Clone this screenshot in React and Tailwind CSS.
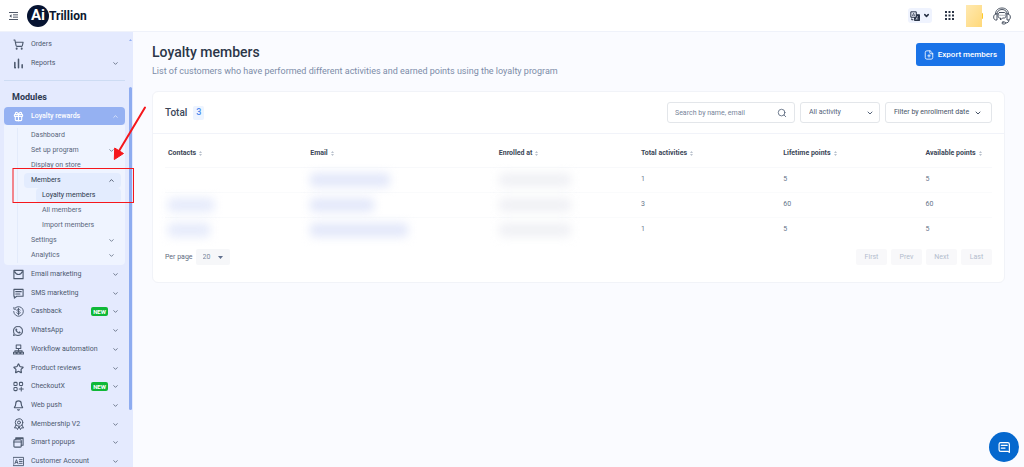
import React from "react";
import { ShoppingCart, Gift, ChevronDown, ChevronUp, Star, Bell, Search } from "lucide-react";
import { BsWhatsapp } from "react-icons/bs";

function Svg({ children, className = "size-[11px]", width = 1.7 }) {
  return (
    <svg viewBox="0 0 24 24" className={className} fill="none" stroke="currentColor" strokeWidth={width} strokeLinecap="round" strokeLinejoin="round" aria-hidden="true">
      {children}
    </svg>
  );
}

const BarsIcon = () => (
  <Svg width={3.4}>
    <path d="M4 10v11M12 3v18M20 15v6M4 21h1" />
  </Svg>
);

const MailIcon = () => (
  <Svg width={2.4}>
    <path d="M2 3h20v18H2zM4 6c3 8 13 8 16 0" />
  </Svg>
);

const MessageIcon = () => (
  <Svg width={2.4}>
    <path d="M2 3h20v15H8l-5 4v-4H2zM6 8h12M6 13h9" />
  </Svg>
);

const CashbackIcon = () => (
  <Svg width={2}>
    <path d="M5 4a10.5 10.5 0 1 1-3.500 8M2 3v4h4M15.500 9c-.5-1.500-1.800-2-3.500-2-2 0-3.500.9-3.500 2.500 0 3.500 7.200 1.500 7.200 5 0 1.700-1.600 2.500-3.700 2.500-1.800 0-3.300-.7-3.700-2.300M12 5v14" />
  </Svg>
);

const WorkflowIcon = () => (
  <Svg width={2.2}>
    <path d="M7 2h10v8H7zM12 10v5M4 18v-3h16v3M1 18h6v4H1zM9 18h6v4H9zM17 18h6v4h-6zM12 15v3" />
  </Svg>
);

const CheckoutIcon = () => (
  <Svg width={2.2}>
    <rect x="2" y="3" width="7" height="7" rx="2" />
    <rect x="14" y="3" width="7" height="7" rx="2" />
    <rect x="2" y="14" width="7" height="7" rx="2" />
    <path d="M18 13v9M13.500 17.500h9" />
  </Svg>
);

const MedalIcon = () => (
  <Svg className="size-[12px]" width={2}>
    <circle cx="12" cy="9" r="7.500" />
    <circle cx="12" cy="9" r="3" />
    <path d="M6 14l-3 6 4-.5 2 3.500 3-6 3 6 2-3.500 4 .5-3-6" />
  </Svg>
);

const PopupsIcon = () => (
  <Svg width={2.4}>
    <rect x="2" y="6" width="16" height="16" rx="2" />
    <path d="M6 6V2h16v16h-4M2 11h16M6 3h15" />
  </Svg>
);

const AccountIcon = () => (
  <Svg width={2}>
    <path d="M1 3h22v18H1zM4 17l3.500-9L11 17M5.500 14h4M14 8h6M14 12h6M14 16h6" />
  </Svg>
);

const modules = [
  { label: "Email marketing", icon: <MailIcon /> },
  { label: "SMS marketing", icon: <MessageIcon /> },
  { label: "Cashback", icon: <CashbackIcon />, isNew: true },
  { label: "WhatsApp", icon: <BsWhatsapp className="size-[10px]" strokeWidth={0.4} /> },
  { label: "Workflow automation", icon: <WorkflowIcon /> },
  { label: "Product reviews", icon: <Star className="size-[11px]" strokeWidth={2.6} /> },
  { label: "CheckoutX", icon: <CheckoutIcon />, isNew: true },
  { label: "Web push", icon: <Bell className="size-[11px]" strokeWidth={2.5} /> },
  { label: "Membership V2", icon: <MedalIcon /> },
  { label: "Smart popups", icon: <PopupsIcon /> },
  { label: "Customer Account", icon: <AccountIcon /> },
];

function ModuleItem({ icon, label, isNew, arrow = true }) {
  return (
    <a href="#" className="flex min-h-0 flex-1 items-center pr-[6px] pl-[9px] text-[#4c596e]">
      <span className="flex w-[18px] shrink-0 items-center">{icon}</span>
      <span className="flex-1 whitespace-nowrap">{label}</span>
      {isNew && (
        <span className="mr-[4px] flex h-[9px] items-center rounded-[2px] bg-[#0fb837] px-[2px] text-[6px] font-bold text-white">NEW</span>
      )}
      {arrow && <ChevronDown className="size-[7px]" strokeWidth={2.6} />}
    </a>
  );
}

function SubItem({ label, arrow, active, nested }) {
  return (
    <a
      href="#"
      className={
        "flex h-[15px] items-center pr-[6px] whitespace-nowrap " +
        (nested ? "ml-3 pl-[6px] " : "pl-[7px] ") +
        (active ? "rounded-[4px] bg-[#e3ecfe] text-[#2c384c]" : "text-[#59667b]")
      }
    >
      <span className="flex-1">{label}</span>
      {arrow === "down" && <ChevronDown className="size-[7px]" strokeWidth={2.6} />}
      {arrow === "up" && <ChevronUp className="size-[7px]" strokeWidth={2.6} />}
    </a>
  );
}

function Sidebar() {
  return (
    <aside className="flex w-[133px] shrink-0 overflow-hidden bg-[#e4eafe] text-[7px]">
      <nav className="min-w-0 flex-1 pl-1" aria-label="Main">
        <div className="mt-[3px] flex h-[38px] flex-col">
          <ModuleItem icon={<ShoppingCart className="size-[11px]" strokeWidth={2.4} />} label="Orders" arrow={false} />
          <ModuleItem icon={<BarsIcon />} label="Reports" arrow />
        </div>
        <hr className="mt-[7px] border-[#cddcf3]" />
        <h2 className="flex h-[26px] items-center pt-[6px] pl-2 text-[9px] font-bold text-[#2c3850]">Modules</h2>
        <a href="#" className="flex h-[18px] items-center rounded-[4px] bg-[#95b1f2] pr-[6px] pl-[9px] font-medium text-white">
          <span className="flex w-[18px]"><Gift className="size-[11px]" strokeWidth={2.4} /></span>
          <span className="flex-1">Loyalty rewards</span>
          <ChevronUp className="size-[7px]" />
        </a>
        <div className="rounded-b-[4px] bg-[#eff4ff] pt-[3px] pr-[4px] pb-[2px] pl-[13px]">
          <div className="border-l border-[#e3ebfb] pl-[6px]">
            <SubItem label="Dashboard" />
            <SubItem label="Set up program" arrow="down" />
            <SubItem label="Display on store" />
            <SubItem label="Members" arrow="up" active />
            <SubItem label="Loyalty members" active nested />
            <SubItem label="All members" nested />
            <SubItem label="Import members" nested />
            <SubItem label="Settings" arrow="down" />
            <SubItem label="Analytics" arrow="down" />
          </div>
        </div>
        <div className="flex h-[206px] flex-col">
          {modules.map((m) => (
            <ModuleItem key={m.label} {...m} />
          ))}
        </div>
      </nav>
      <div className="flex w-[8px] shrink-0 flex-col items-end pr-px" aria-hidden="true">
        <svg viewBox="0 0 6 4" className="mt-[7px] h-[2px] w-[3px]" fill="#94b0f2"><path d="M3 0l3 4H0z" /></svg>
        <div className="mt-[46px] h-[323px] w-[3px] rounded-full bg-[#8eacf0]" />
      </div>
    </aside>
  );
}

function Header() {
  return (
    <header className="flex h-8 shrink-0 items-center border-b border-[#eff2fa] bg-white pr-[13px] pl-[9px]">
      <button aria-label="Toggle menu" className="text-[#3c4658]">
        <svg viewBox="0 0 18 16" className="h-[8px] w-[9px]" fill="none" stroke="currentColor" strokeWidth="1.800"><path d="M0 1h18M8 5.700h10M8 10.300h10M0 15h18" /><path d="M5 4.500v7L1 8z" fill="currentColor" stroke="none" /></svg>
      </button>
      <a href="#" className="ml-[9px] flex items-center text-[#0b1730]">
        <span className="flex size-[22px] items-center justify-center rounded-full bg-[#061331] text-[15px] font-bold text-white">Ai</span>
        <span className="text-[12px] font-bold">Trillion</span>
      </a>
      <div className="ml-auto flex items-center">
        <button aria-label="Language" className="flex h-[15px] items-center gap-[3px] rounded-[3px] bg-[#eff3fe] px-[2px] text-[#252f43]">
          <svg viewBox="0 0 24 24" className="size-[10px]" fill="none" stroke="currentColor" strokeWidth="2.400">
            <path d="M11 9h12v14H11z" fill="currentColor" />
            <path d="M2 2h13v13H2z" fill="#eff3fe" />
            <path d="M5.500 12l3-7 3 7M6.500 10h4" strokeWidth="1.500" />
            <path d="M14 19h6M18 12v2l-4 7" stroke="#eff3fe" strokeWidth="1.500" />
            <path d="M4 18v3h4" />
          </svg>
          <ChevronDown className="size-[7px]" strokeWidth={5} />
        </button>
        <button aria-label="Apps" className="ml-[13px] text-[#2b3446]">
          <svg viewBox="0 0 18 18" className="size-[9px]" fill="currentColor">
            <path d="M0 0h4v4H0zM7 0h4v4H7zM14 0h4v4h-4zM0 7h4v4H0zM7 7h4v4H7zM14 7h4v4h-4zM0 14h4v4H0zM7 14h4v4H7zM14 14h4v4h-4z" />
          </svg>
        </button>
        <button aria-label="Account" className="ml-[12px] flex items-center">
          <span className="h-[22px] w-[16px] bg-linear-to-br from-[#ffe9b0] to-[#ffd878]" />
          <span className="h-[6px] w-px rounded-r-full bg-[#ffc928]" />
        </button>
        <button aria-label="Support" className="ml-[10px] text-[#3f4958]">
          <svg viewBox="0 0 36 36" className="size-[18px]" fill="none" stroke="currentColor" strokeWidth="1.900" strokeLinecap="round" strokeLinejoin="round">
            <path d="M5 14C5 6 11 2 18 2s13 4 13 12M8 14c0-5.500 4-9 10-9s10 3.500 10 9" />
            <path d="M5 14c-5 1-5 11 0 12h3V14zM31 14c5 1 5 11 0 12h-3V14zM32 26c0 4-2 6-7 6" />
            <path d="M13 11h10c4 0 4 11 0 11h-4l-4 4v-4h-2c-4 0-4-11 0-11zM14 16.500h.1M18 16.500h.1M22 16.500h.1" />
            <rect x="18" y="30" width="7" height="4" rx="2" />
          </svg>
        </button>
      </div>
    </header>
  );
}

const columns = ["Contacts", "Email", "Enrolled at", "Total activities", "Lifetime points", "Available points"];

const rows = [
  { contact: "", email: "w-[80px]", total: 1, lifetime: 5, available: 5 },
  { contact: "w-[46px]", email: "w-[64px]", total: 3, lifetime: 60, available: 60 },
  { contact: "w-[42px]", email: "w-[98px]", total: 1, lifetime: 5, available: 5 },
];

const Redacted = ({ size, tone }) => <span className={"block h-[14px] rounded-[4px] blur-[5px] " + size + " " + tone} />;

function MembersTable() {
  return (
    <table className="w-full table-fixed text-left text-[7px] text-[#66758a]">
      <colgroup>
        <col className="w-[17.2%]" />
        <col className="w-[22.8%]" />
        <col className="w-[17.2%]" />
        <col className="w-[17.2%]" />
        <col className="w-[17.2%]" />
        <col />
      </colgroup>
      <thead>
        <tr className="h-[26px] border-b border-[#f8f9fb]">
          {columns.map((c) => (
            <th key={c} className="pl-[3px] font-bold whitespace-nowrap text-[#3b4657]">
              <span className="flex items-center gap-[3px]">
                {c}
                <svg viewBox="0 0 6 10" className="h-[5px] w-[3px]" fill="#b9c1cd" aria-hidden="true"><path d="M3 0l3 4H0zM3 10l3-4H0z" /></svg>
              </span>
            </th>
          ))}
        </tr>
      </thead>
      <tbody>
        {rows.map((r, i) => (
          <tr key={i} className="h-[25px] border-b border-[#fafbfc] last:border-0">
            <td className="pl-[3px]">{r.contact && <Redacted size={r.contact} tone="bg-[#e6ebfb]" />}</td>
            <td className="pl-[3px]"><Redacted size={r.email} tone="bg-[#e3e8fa]" /></td>
            <td className="pl-[3px]"><Redacted size="w-[72px]" tone="bg-[#f0f1f5]" /></td>
            <td className="pl-[3px]">{r.total}</td>
            <td className="pl-[3px]">{r.lifetime}</td>
            <td className="pl-[3px]">{r.available}</td>
          </tr>
        ))}
      </tbody>
    </table>
  );
}

function Annotation() {
  return (
    <div className="pointer-events-none absolute top-[105px] left-[12px]" aria-hidden="true">
      <svg viewBox="0 0 136 100" className="h-[100px] w-[136px]" fill="none" stroke="#f5171c">
        <rect x="1" y="63.500" width="120.500" height="34" strokeWidth="1" />
        <path d="M133 2.500L107 46" strokeWidth="2" strokeLinecap="round" />
        <path d="M102.300 54.500l.4-11.500 8.800 5.500z" fill="#f5171c" strokeWidth="1" />
      </svg>
    </div>
  );
}

export default function App() {
  return (
    <div className="relative flex h-screen flex-col overflow-hidden bg-[#fafbff] font-[Roboto,sans-serif] leading-none">
      <Header />
      <div className="flex min-h-0 flex-1">
        <Sidebar />
        <main className="min-w-0 flex-1 overflow-hidden pt-[11px] pr-[19px] pl-[19px]">
          <div className="flex items-start justify-between">
            <div>
              <h1 className="text-[14px] leading-[18px] font-medium text-[#2b3648]">Loyalty members</h1>
              <p className="mt-[4px] text-[9px] leading-[12px] text-[#7c8ca8]">
                List of customers who have performed different activities and earned points using the loyalty program
              </p>
            </div>
            <button className="flex h-[23px] items-center gap-[4px] rounded-[3px] bg-[#1a73e8] px-[8px] text-[8px] font-medium text-white">
              <Svg className="size-[10px]" width={2}>
                <path d="M14 2H7a4 4 0 0 0-4 4v12a4 4 0 0 0 4 4h10a4 4 0 0 0 4-4V9zM14 2v5a2 2 0 0 0 2 2h5M12 11v6M9 14h6" />
              </Svg>
              Export members
            </button>
          </div>
          <section className="mt-[14px] rounded-[6px] border border-[#f1f3f8] bg-white">
            <div className="flex h-[42px] items-center border-b border-[#f1f3f9] px-[12px]">
              <h2 className="text-[10px] font-medium text-[#3b4658]">Total</h2>
              <span className="ml-[6px] flex h-[14px] w-[11px] items-center justify-center rounded-[2px] bg-[#edf4ff] text-[9px] font-medium text-[#4b8bee]">3</span>
              <div className="ml-auto flex gap-[5px] text-[7px] text-[#56647a]">
                <label className="flex h-[21px] w-[128px] items-center rounded-[3px] border border-[#e3e6ea] px-[7px]">
                  <input aria-label="Search members" placeholder="Search by name, email" className="min-w-0 flex-1 outline-none placeholder:text-[#77859a]" />
                  <Search className="size-[10px]" />
                </label>
                <div className="relative">
                  <select aria-label="Activity" className="h-[21px] w-[80px] appearance-none rounded-[3px] border border-[#e3e6ea] pl-[8px]">
                    <option>All activity</option>
                  </select>
                  <ChevronDown className="pointer-events-none absolute top-[7px] right-[6px] size-[8px]" strokeWidth={3} />
                </div>
                <button className="flex h-[21px] w-[107px] items-center gap-[5px] rounded-[3px] border border-[#e3e6ea] pl-[8px] text-[#465366]">
                  Filter by enrollment date
                  <ChevronDown className="size-[8px]" strokeWidth={3} />
                </button>
              </div>
            </div>
            <div className="px-[12px] pt-[7px] pb-[17px]">
              <MembersTable />
              <div className="mt-[7px] flex items-center text-[7px] text-[#5d6a7e]">
                <label htmlFor="per-page">Per page</label>
                <div className="relative ml-[3px]">
                  <select id="per-page" className="h-[16px] w-[34px] appearance-none rounded-[2px] bg-[#f6f7f9] pl-[7px] text-[#7b889b]">
                    <option>20</option>
                  </select>
                  <svg viewBox="0 0 10 6" className="pointer-events-none absolute top-[7px] right-[7px] h-[3px] w-[5px]" fill="#60708e" aria-hidden="true"><path d="M0 0h10L5 6z" /></svg>
                </div>
                <div className="ml-auto flex gap-[4px]">
                  {["First", "Prev", "Next", "Last"].map((p) => (
                    <button key={p} className="h-[16px] w-[31px] rounded-[2px] bg-[#f8f8fa] text-[#b3bccd]">{p}</button>
                  ))}
                </div>
              </div>
            </div>
          </section>
        </main>
      </div>
      <button aria-label="Open chat" className="absolute right-[5px] bottom-[5px] flex size-[30px] items-center justify-center rounded-full bg-[#0568ce] text-white">
        <Svg className="size-[13px]" width={2.2}>
          <path d="M21 21l-3-2H5a3 3 0 0 1-3-3V6a3 3 0 0 1 3-3h13a3 3 0 0 1 3 3zM6 8h11M6 13h7" />
        </Svg>
      </button>
      <Annotation />
    </div>
  );
}
